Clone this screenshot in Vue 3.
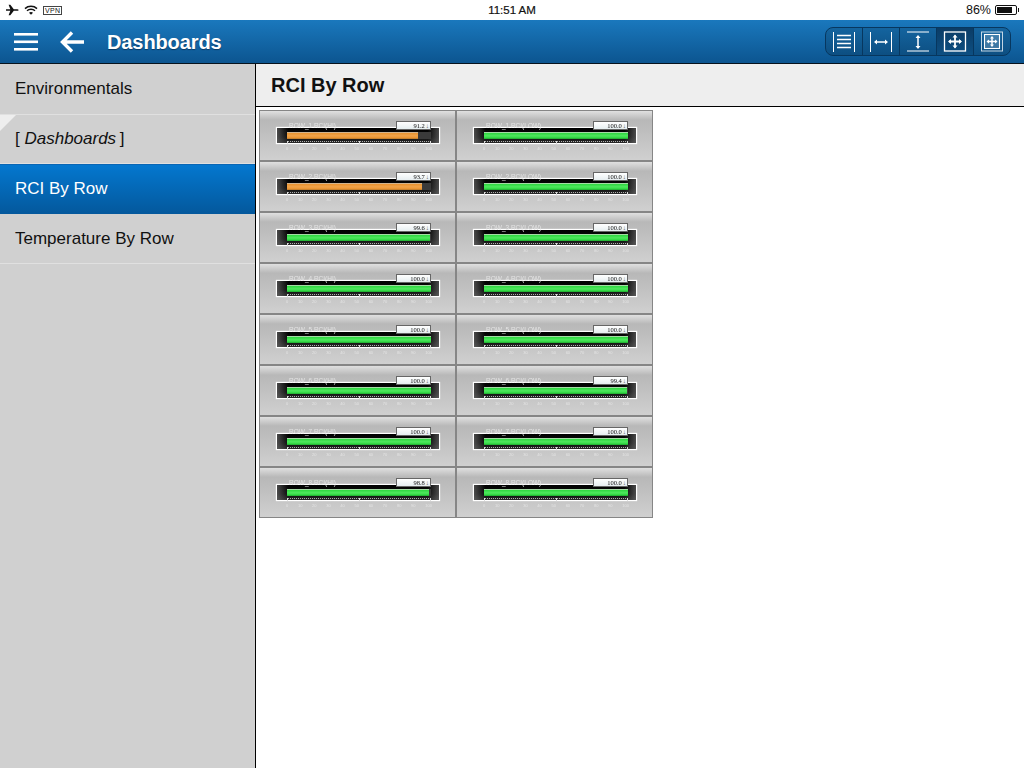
<script setup>
import { ref } from 'vue'

const menu = ref([
  { label: 'Environmentals' },
  { label: 'Dashboards', folder: true },
  { label: 'RCI By Row', active: true },
  { label: 'Temperature By Row' },
])

const gauges = ref([
  { name: 'ROW_1 RCI(HI)', value: 91.2 },
  { name: 'ROW_1 RCI(LOW)', value: 100.0 },
  { name: 'ROW_2 RCI(HI)', value: 93.7 },
  { name: 'ROW_2 RCI(LOW)', value: 100.0 },
  { name: 'ROW_3 RCI(HI)', value: 99.6 },
  { name: 'ROW_3 RCI(LOW)', value: 100.0 },
  { name: 'ROW_4 RCI(HI)', value: 100.0 },
  { name: 'ROW_4 RCI(LOW)', value: 100.0 },
  { name: 'ROW_5 RCI(HI)', value: 100.0 },
  { name: 'ROW_5 RCI(LOW)', value: 100.0 },
  { name: 'ROW_6 RCI(HI)', value: 100.0 },
  { name: 'ROW_6 RCI(LOW)', value: 99.4 },
  { name: 'ROW_7 RCI(HI)', value: 100.0 },
  { name: 'ROW_7 RCI(LOW)', value: 100.0 },
  { name: 'ROW_8 RCI(HI)', value: 98.8 },
  { name: 'ROW_8 RCI(LOW)', value: 100.0 },
])

const scale = [0, 10, 20, 30, 40, 50, 60, 70, 80, 90, 100]
</script>

<template>
  <div class="page">
    <div class="status">
      <div class="status-left">
        <svg width="13" height="12" viewBox="0 0 15 12"><path d="M0 5h5L3 0h2l4 5h4c2 0 2 2 0 2H9l-4 5H3l2-5H0l0-.5z" fill="#111" /></svg>
        <svg width="14" height="10" viewBox="0 0 14 10" fill="none" stroke="#111" stroke-width="1.500"><path d="M1 3.600c3.300-3 8.700-3 12 0M3 5.800c2.200-2 5.800-2 8 0" /><path d="M7 9.800 5 7.800c1.200-1 2.800-1 4 0z" fill="#111" stroke="none" /></svg>
        <span class="vpn">VPN</span>
      </div>
      <span class="time">11:51 AM</span>
      <div class="status-right">
        <span>86%</span>
        <span class="battery"><i></i></span>
      </div>
    </div>

    <header class="header">
      <svg class="burger" width="24" height="18" viewBox="0 0 24 18" fill="#fff"><rect width="24" height="2.600" y="0" /><rect width="24" height="2.600" y="7.500" /><rect width="24" height="2.600" y="15" /></svg>
      <svg class="back" width="24" height="22" viewBox="0 0 24 22" fill="none" stroke="#fff" stroke-width="3.400"><path d="M24 11H3M12 1.500 2.500 11l9.500 9.500" /></svg>
      <h1>Dashboards</h1>
      <div class="tools">
        <button class="tool">
          <svg width="24" height="22" viewBox="0 0 24 22" fill="none" stroke="#fff"><path d="M1.500 1v20M22.500 1v20" /><path d="M5 4.500h14M5 8.500h14M5 12.500h14M5 16.500h14" stroke-width="1.400" /></svg>
        </button>
        <button class="tool">
          <svg width="24" height="22" viewBox="0 0 24 22" fill="none" stroke="#fff"><path d="M1.500 1v20M22.500 1v20" /><path d="M6 11h12" stroke-width="1.500" /><path d="M8 8.500 5 11l3 2.500zM16 8.500l3 2.500-3 2.500z" fill="#fff" stroke="none" /></svg>
        </button>
        <button class="tool">
          <svg width="24" height="22" viewBox="0 0 24 22" fill="none" stroke="#fff"><path d="M1 1h22M1 20h22" /><path d="M12 5v12" stroke-width="1.500" /><path d="M9.500 7 12 4l2.500 3zM9.500 15l2.500 3 2.500-3z" fill="#fff" stroke="none" /></svg>
        </button>
        <button class="tool on">
          <svg width="24" height="22" viewBox="0 0 24 22" fill="none" stroke="#fff"><rect x="1.500" y="1" width="21" height="19" stroke-width="1.300" /><path d="M6 10.500h12M12 4.500v12" stroke-width="1.800" /><path d="M8 8 5 10.500 8 13zM16 8l3 2.500-3 2.500zM9.500 6.500 12 3.500l2.500 3zM9.500 14.500l2.500 3 2.500-3z" fill="#fff" stroke="none" /></svg>
        </button>
        <button class="tool">
          <svg width="24" height="22" viewBox="0 0 24 22" fill="none" stroke="#fff"><rect x="1.500" y="1" width="21" height="19" stroke-opacity=".75" /><rect x="4.500" y="3.500" width="15" height="14" fill="#fff" fill-opacity=".2" stroke-width="1.100" /><path d="M7.500 10.500h9M12 6v9" stroke-width="1.500" /><path d="M9 8.500 6.500 10.500 9 12.500zM15 8.500l2.500 2-2.500 2zM10 7.500l2-2.500 2 2.500zM10 13.500l2 2.500 2-2.500z" fill="#fff" stroke="none" /></svg>
        </button>
      </div>
    </header>

    <div class="body">
      <nav class="side">
        <div
          v-for="item in menu"
          :key="item.label"
          class="item"
          :class="{ active: item.active, folder: item.folder }"
        >
          <template v-if="item.folder">[ <em>{{ item.label }}</em> ]</template>
          <template v-else>{{ item.label }}</template>
        </div>
      </nav>

      <main class="main">
        <h2 class="title">RCI By Row</h2>
        <div class="grid">
          <div v-for="g in gauges" :key="g.name" class="cell">
            <div class="gauge">
              <span class="name">{{ g.name }}</span>
              <span class="value"><b>{{ g.value.toFixed(1) }}</b><i>↓</i></span>
              <div class="frame">
                <div class="track">
                  <div
                    class="bar"
                    :class="{ warn: g.value < 95 }"
                    :style="{ width: g.value + '%' }"
                  ></div>
                </div>
                <div class="rule"><i></i><i></i><i></i></div>
              </div>
              <div class="ticks">
                <span v-for="n in scale" :key="n">{{ n }}</span>
              </div>
            </div>
          </div>
        </div>
      </main>
    </div>
  </div>
</template>

<style scoped>
.page {
  width: 1024px;
  height: 768px;
  display: flex;
  flex-direction: column;
  overflow: hidden;
  background: #fff;
  font-family: "Liberation Sans", Arial, sans-serif;
  color: #111;
}
.status {
  height: 20px;
  flex: none;
  display: flex;
  align-items: center;
  justify-content: space-between;
  padding: 0 7px 0 6px;
  position: relative;
  font-size: 12.500px;
}
.status-left {
  display: flex;
  align-items: center;
  gap: 5px;
}
.vpn {
  border: 1px solid #444;
  font-size: 7px;
  line-height: 7px;
  padding: 0 1px;
  letter-spacing: 0.3px;
}
.time {
  position: absolute;
  left: 0;
  right: 0;
  text-align: center;
  font-size: 11.500px;
  -webkit-text-stroke: 0.2px #111;
}
.status-right {
  display: flex;
  align-items: center;
  gap: 4px;
}
.battery {
  width: 22px;
  height: 10px;
  border: 1px solid #111;
  border-radius: 2px;
  padding: 1px;
  box-sizing: border-box;
  display: block;
  position: relative;
}
.battery i {
  display: block;
  width: 84%;
  height: 100%;
  background: #111;
}
.battery::after {
  content: "";
  position: absolute;
  right: -3px;
  top: 2px;
  width: 1px;
  height: 4px;
  background: #111;
}
.header {
  height: 44px;
  flex: none;
  box-sizing: border-box;
  border-bottom: 1px solid #06121d;
  background: linear-gradient(#1a78bd, #0c5590);
  display: flex;
  align-items: center;
  padding: 0 13px 0 14px;
}
.burger {
  margin-right: 22px;
}
.back {
  margin-right: 23px;
}
h1 {
  margin: 2px 0 0;
  flex: 1;
  font-size: 20px;
  font-weight: 700;
  letter-spacing: -0.1px;
  color: #fff;
  text-shadow: 0 1px 1px rgba(0, 30, 60, 0.6);
}
.tools {
  display: flex;
  height: 29px;
  box-sizing: border-box;
  border: 1px solid #07375f;
  border-radius: 8px;
  overflow: hidden;
  background: linear-gradient(#14649f, #0d4f82);
}
.tool {
  width: 37px;
  padding: 0;
  border: 0;
  border-right: 1px solid #07375f;
  background: transparent;
  display: flex;
  align-items: center;
  justify-content: center;
}
.tool:last-child {
  width: 36px;
  border-right: 0;
}
.tool.on {
  background: linear-gradient(#0b3c66, #0d4f82);
}
.body {
  flex: 1;
  display: flex;
  min-height: 0;
}
.side {
  width: 256px;
  flex: none;
  box-sizing: border-box;
  border-right: 1px solid #000;
  background: #d0d0d0;
}
.item {
  height: 50px;
  box-sizing: border-box;
  padding: 0 15px;
  display: flex;
  align-items: center;
  white-space: pre;
  font-size: 17px;
  color: #111;
  border-bottom: 1px solid #e0e0e0;
  position: relative;
}
.item:first-child {
  height: 51px;
  padding-bottom: 1px;
}
.item.folder {
  height: 49px;
  padding-bottom: 1px;
}
.item.folder em {
  margin-right: -1px;
}
.item.folder::before {
  content: "";
  position: absolute;
  left: 0;
  top: 0;
  border-top: 16px solid #eee;
  border-right: 16px solid transparent;
}
.item.active {
  color: #fff;
  border-bottom: 0;
  padding-bottom: 1px;
  box-shadow: inset 0 1px #0a66b4;
  background: linear-gradient(#0478d0, #04589c);
}
.main {
  flex: 1;
  min-width: 0;
}
.title {
  margin: 0;
  height: 43px;
  box-sizing: border-box;
  border-bottom: 1px solid #000;
  background: #eee;
  padding: 0 15px;
  display: flex;
  align-items: center;
  font-size: 20px;
  font-weight: 700;
}
.grid {
  display: grid;
  grid-template-columns: repeat(2, 197px);
  grid-auto-rows: 51px;
  margin: 3px 0 0 3px;
}
.cell {
  box-sizing: border-box;
  border: 1px solid #868686;
  background: linear-gradient(#e0e0e0 0, #b8b8b8 9px, #bebebe 20px, #d0d0d0 100%);
  padding: 16px 0 0 16px;
}
.gauge {
  position: relative;
  width: 164px;
}
.name {
  position: absolute;
  left: 13px;
  top: -5px;
  font-size: 6.500px;
  line-height: 8px;
  color: #e4e4e4;
  white-space: nowrap;
  filter: blur(0.3px);
}
.value {
  position: absolute;
  left: 120px;
  top: -6px;
  z-index: 1;
  width: 35px;
  height: 9px;
  box-sizing: border-box;
  border: 1px solid #666;
  background: linear-gradient(#fff, #e6eef0);
  font-family: "Liberation Serif", serif;
  font-size: 6.500px;
  line-height: 7px;
  text-align: right;
  color: #111;
}
.value b {
  font-weight: 400;
  display: inline-block;
  filter: blur(0.25px);
}
.value i {
  font-style: normal;
  padding: 0 1px;
  color: #666;
}
.frame {
  height: 17px;
  box-sizing: border-box;
  border: 1px solid #fff;
  box-shadow: 0 0 1px #fff;
  background:
    linear-gradient(90deg, rgba(120, 120, 120, 0.6) 0, rgba(120, 120, 120, 0) 7%, rgba(120, 120, 120, 0) 93%, rgba(120, 120, 120, 0.6) 100%),
    linear-gradient(#000, #0c0c0c 60%, #2a2a2a);
  padding: 4px 8px 0 10px;
}
.track {
  height: 7px;
  background: #3a3a3a;
}
.bar {
  height: 100%;
  background: linear-gradient(#a5dca5 0, #a5dca5 14%, #2ed640 15%, #4fe85e 55%, #2ed640 85%, #1f9a2e 100%);
}
.bar.warn {
  background: linear-gradient(#d2b48e 0, #d2b48e 14%, #e8922f 15%, #f0a34a 55%, #e8922f 85%, #a9712c 100%);
}
.rule {
  margin-top: 2px;
  height: 1px;
  border-top: 1px dotted #b0b0b0;
  display: flex;
  justify-content: space-between;
}
.rule i {
  width: 1px;
  height: 3px;
  margin-top: -1px;
  background: #ddd;
}
.ticks {
  margin: 2px 8px 0 10px;
  display: flex;
  justify-content: space-between;
  font-size: 4px;
  line-height: 5px;
  color: #e4e4e4;
  filter: blur(0.3px);
}
</style>

<style>
body {
  margin: 0;
}
</style>
